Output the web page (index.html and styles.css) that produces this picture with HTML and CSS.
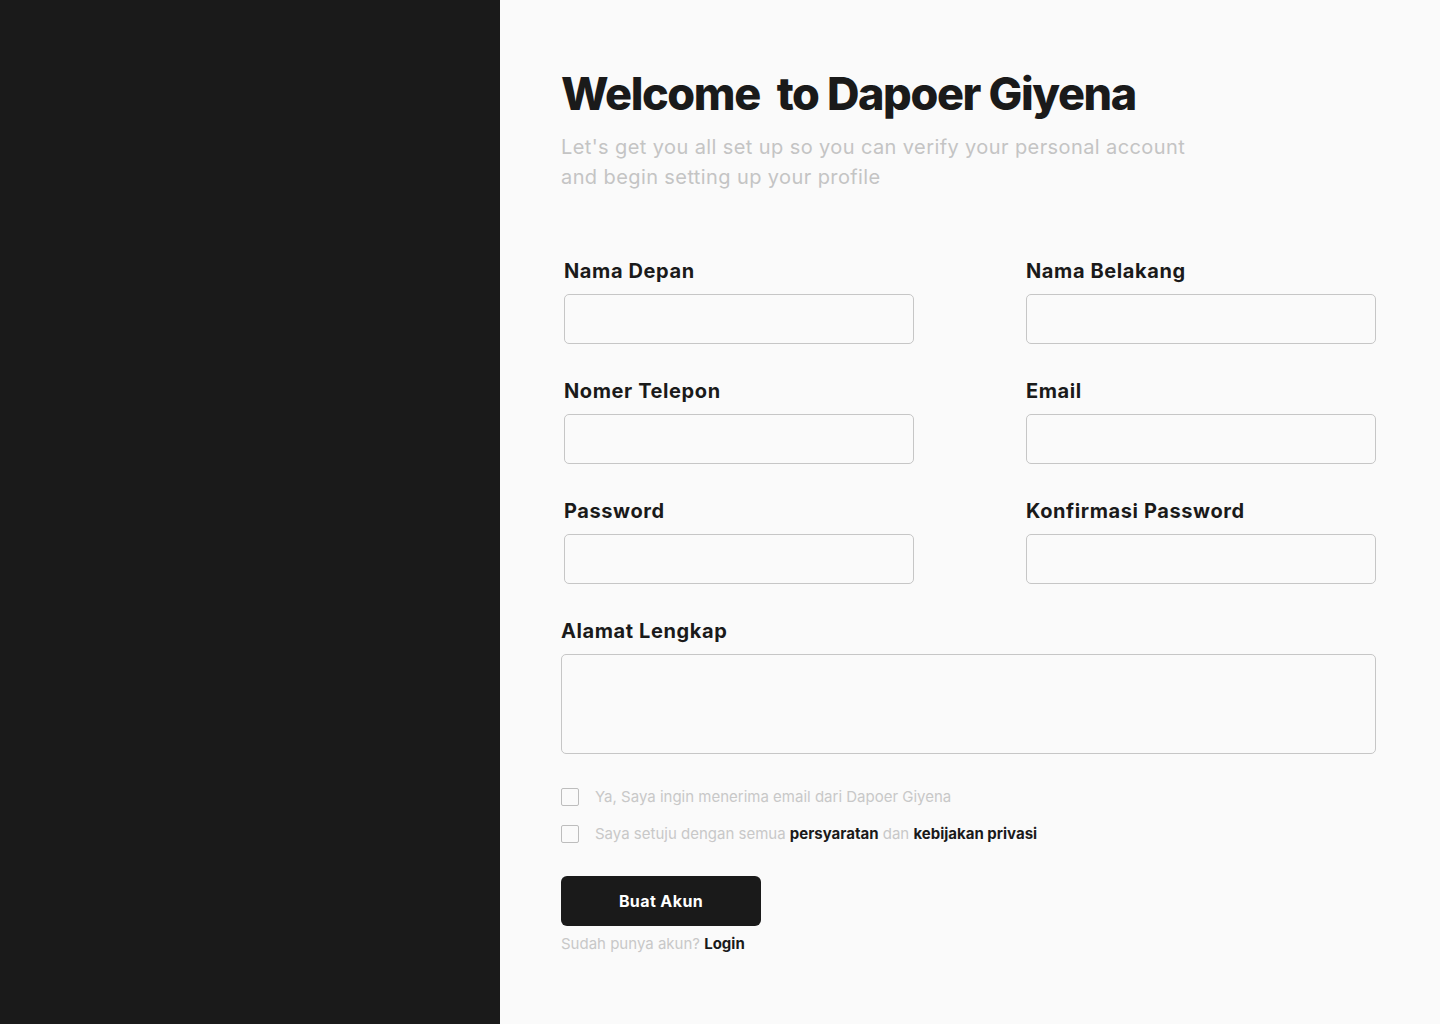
FILE: index.html
```html
<!DOCTYPE html>
<html lang="id">
<head>
<meta charset="utf-8">
<title>Dapoer Giyena - Daftar</title>
<link rel="stylesheet" href="styles.css">
</head>
<body>
<div class="page">
  <aside class="side"></aside>
  <main class="main">
    <h1 class="title">Welcome&nbsp; to Dapoer Giyena</h1>
    <p class="subtitle">Let's get you all set up so you can verify your personal account<br>and begin setting up your profile</p>
    <form class="form">
      <div class="grid">
        <div class="field"><label class="label">Nama Depan</label><input class="input" type="text"></div>
        <div class="field"><label class="label">Nama Belakang</label><input class="input" type="text"></div>
        <div class="field"><label class="label">Nomer Telepon</label><input class="input" type="text"></div>
        <div class="field"><label class="label">Email</label><input class="input" type="text"></div>
        <div class="field"><label class="label">Password</label><input class="input" type="password"></div>
        <div class="field"><label class="label">Konfirmasi Password</label><input class="input" type="password"></div>
      </div>
      <div class="field full"><label class="label">Alamat Lengkap</label><textarea class="textarea"></textarea></div>
      <div class="checks">
        <label class="check"><span class="box"></span><span>Ya, Saya ingin menerima email dari Dapoer Giyena</span></label>
        <label class="check"><span class="box"></span><span>Saya setuju dengan semua <b>persyaratan</b> dan <b>kebijakan privasi</b></span></label>
      </div>
      <button class="btn" type="button">Buat Akun</button>
      <p class="login">Sudah punya akun? <b>Login</b></p>
    </form>
  </main>
</div>
</body>
</html>
```
FILE: styles.css
```css
* { box-sizing: border-box; }
html, body { margin: 0; padding: 0; }
body {
  font-family: Inter, "Noto Sans", sans-serif;
  background: #fafafa;
  color: #1a1a1a;
}
.page { display: flex; width: 1440px; height: 1024px; }
.side { width: 500px; flex: none; background: #1a1a1a; }
.main {
  flex: 1;
  background: #fafafa;
  padding: 66px 64px 0 61px;
}
.title {
  margin: 0;
  font-size: 45px;
  line-height: 56px;
  font-weight: 800;
  letter-spacing: -1.4px;
  color: #1a1a1a;
}
.subtitle {
  margin: 10px 0 0;
  font-size: 20px;
  line-height: 30px;
  font-weight: 400;
  letter-spacing: 0.4px;
  color: #c4c4c4;
}
.form { margin-top: 67px; }
.grid {
  display: grid;
  grid-template-columns: 350px 350px;
  column-gap: 112px;
  row-gap: 35px;
  margin-left: 3px;
}
.field { display: flex; flex-direction: column; gap: 11px; }
.full { margin-top: 35px; }
.label {
  font-size: 20px;
  line-height: 24px;
  font-weight: 700;
  letter-spacing: 0.6px;
  color: #1a1a1a;
}
.input, .textarea {
  display: block;
  width: 100%;
  height: 50px;
  border: 1px solid #c6c6c6;
  border-radius: 5px;
  background: #fafafa;
  font: inherit;
  outline: none;
}
.textarea { height: 100px; resize: none; }
.checks { margin-top: 34px; display: flex; flex-direction: column; gap: 19px; }
.check {
  display: flex;
  align-items: center;
  gap: 16px;
  font-size: 15px;
  line-height: 18px;
  color: #c8c8c8;
}
.check b { color: #1a1a1a; font-weight: 700; }
.box {
  width: 18px; height: 18px; flex: none;
  border: 1px solid #bdbdbd;
  border-radius: 2px;
  background: #fafafa;
}
.btn {
  margin-top: 33px;
  display: block;
  width: 200px;
  height: 50px;
  border: 0;
  border-radius: 6px;
  background: #1a1a1a;
  color: #fff;
  font: inherit;
  font-size: 16px;
  font-weight: 700;
  letter-spacing: 0.4px;
}
.login {
  margin: 7px 0 0;
  font-size: 15px;
  line-height: 22px;
  color: #c8c8c8;
}
.login b { color: #1a1a1a; font-weight: 700; }
```
